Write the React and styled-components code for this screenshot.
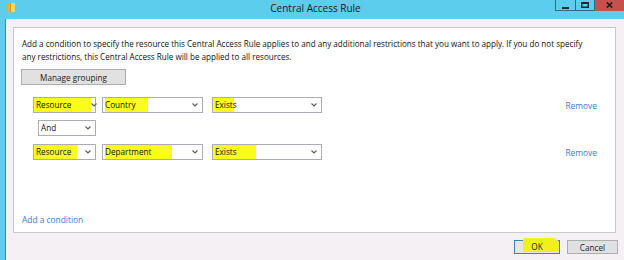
import React from 'react';
import styled, { createGlobalStyle } from 'styled-components';

const Global = createGlobalStyle`
  html, body { margin: 0; padding: 0; background: #f4f0f4; }
  body { font-family: "Open Sans", "Noto Sans", sans-serif; color: #1b1b1b; }
  #root { width: 624px; height: 260px; overflow: hidden; }
`;

const Window = styled.div`
  width: 624px;
  height: 260px;
  display: flex;
  flex-direction: column;
  background: #5ccdec;
  overflow: hidden;
`;

const TitleBar = styled.div`
  height: 19px;
  flex: none;
  display: grid;
  grid-template-columns: 1fr auto 1fr;
  align-items: start;
  padding-left: 7px;
  background: #5ccdec;
`;

const TitleIcon = styled.svg`
  margin-top: 3px;
  display: block;
`;

const TitleText = styled.div`
  font-size: 10px;
  line-height: 12px;
  margin-top: 2px;
  color: #1a1a1a;
`;

const Controls = styled.div`
  justify-self: end;
  display: flex;
  height: 11px;
`;

const CtrlButton = styled.div`
  flex: none;
  width: ${p => p.$w}px;
  height: 11px;
  box-sizing: border-box;
  display: flex;
  align-items: center;
  justify-content: center;
  background-color: ${p => (p.$close ? '#c7504e' : '#5ccdec')};
  border-right: 1px solid ${p => (p.$close ? '#c7504e' : '#2f6f85')};
  border-bottom: 1px solid ${p => (p.$close ? '#c7504e' : '#2f6f85')};
  border-left: ${p => (p.$first ? '1px solid #2f6f85' : 'none')};
`;

const Frame = styled.div`
  flex: 1;
  display: flex;
  padding-left: 5px;
  min-height: 0;
`;

const Client = styled.div`
  flex: 1;
  display: flex;
  flex-direction: column;
  background: #f4f0f4;
  border-left: 1px solid #3d8aa2;
  padding: 8px 6px 0 7px;
`;

const Panel = styled.div`
  height: 206px;
  box-sizing: border-box;
  margin-right: 2px;
  background: #fff;
  border: 1px solid #c9c9c9;
  display: flex;
  flex-direction: column;
  padding: 9px 8px 0 8px;
  font-size: 8px;
`;

const Intro = styled.p`
  margin: 0;
  font-size: 8.1px;
  line-height: 13px;
  white-space: nowrap;
  color: #111;
`;

const PushButton = styled.button`
  font-family: inherit;
  font-size: 8.2px;
  color: #1b1b1b;
  box-sizing: border-box;
  height: ${p => p.$h || 16}px;
  width: ${p => p.$w}px;
  padding: 0;
  display: flex;
  align-items: center;
  justify-content: center;
  background: ${p => (p.$default ? '#e6e6e6' : '#e1e1e1')};
  border: 1px solid ${p => (p.$default ? '#3b82b8' : '#adadad')};
  border-radius: 0;
  margin: ${p => p.$m || '0'};
`;

const Row = styled.div`
  display: flex;
  align-items: center;
  height: 16px;
  margin-top: ${p => p.$mt}px;
  padding-left: ${p => p.$pl}px;
`;

const SelectBox = styled.div`
  box-sizing: border-box;
  width: ${p => p.$w}px;
  height: 16px;
  margin-left: ${p => p.$ml || 0}px;
  border: 1px solid #abadb3;
  background: #fff;
  display: flex;
  align-items: center;
  padding-left: 2px;
  padding-right: 4px;
`;

const SelectValue = styled.span`
  flex: 1;
  font-size: 8.2px;
  line-height: 14px;
  white-space: nowrap;
  display: flex;
  color: #111;
`;

const Mark = styled.span`
  display: inline-block;
  box-sizing: border-box;
  background: #fbfb1e;
  height: 14px;
  line-height: 14px;
  width: ${p => p.$w}px;
  margin-left: -${p => p.$ml || 0}px;
  padding-left: ${p => p.$ml || 0}px;
  white-space: nowrap;
  overflow: visible;
`;

const Chevron = styled.svg`
  flex: none;
  display: block;
`;

const Link = styled.a`
  color: #3a7ad8;
  font-size: 8.4px;
  line-height: 13px;
  text-decoration: none;
  cursor: pointer;
  margin-left: ${p => (p.$right ? 'auto' : '0')};
  margin-right: ${p => (p.$right ? 10 : 0)}px;
`;

const BottomLink = styled.div`
  margin-top: auto;
  margin-bottom: 6px;
  display: flex;
`;

const Footer = styled.div`
  display: flex;
  justify-content: flex-end;
  gap: 7px;
  margin-top: 7px;
`;

const OkMark = styled.span`
  display: inline-flex;
  align-items: center;
  justify-content: center;
  width: 38px;
  height: 14px;
  margin-left: 8px;
  background: #f0f01a;
  border-radius: 2px 6px 3px 1px;
  transform: translateY(-2px);
  line-height: 14px;
`;

const OkText = styled.span`
  transform: translateY(2px);
  margin-left: -8px;
`;

function Select({ w, ml, value, mark }) {
  return (
    <SelectBox $w={w} $ml={ml}>
      <SelectValue>
        {mark ? (
          <Mark $w={mark.w} $ml={mark.ml}>{value}</Mark>
        ) : (
          value
        )}
      </SelectValue>
      <Chevron width="6" height="4" viewBox="0 0 6 4">
        <polyline points="0.5,0.5 3,3 5.5,0.5" fill="none" stroke="#5a5a5a" strokeWidth="1.1" />
      </Chevron>
    </SelectBox>
  );
}

function Condition({ mt, a, b, c }) {
  return (
    <Row $mt={mt} $pl={11}>
      <Select w={63} value="Resource" mark={a} />
      <Select w={101} ml={6} value={b.value} mark={b.mark} />
      <Select w={110} ml={9} value="Exists" mark={c} />
      <Link $right>Remove</Link>
    </Row>
  );
}

export default function App() {
  return (
    <>
      <Global />
      <Window>
        <TitleBar>
          <TitleIcon width="9" height="10" viewBox="0 0 9 10">
            <rect x="0.5" y="1" width="5" height="8.5" fill="#d9b344" />
            <rect x="3" y="0" width="5" height="9" fill="#f3d36b" />
            <rect x="3" y="0" width="1" height="9" fill="#c99b2c" />
          </TitleIcon>
          <TitleText>Central Access Rule</TitleText>
          <Controls>
            <CtrlButton $w={21} $first>
              <svg width="7" height="7" viewBox="0 0 7 7">
                <rect x="0" y="5" width="7" height="2" fill="#1c2b33" />
              </svg>
            </CtrlButton>
            <CtrlButton $w={19}>
              <svg width="8" height="6" viewBox="0 0 8 6">
                <rect x="0.75" y="0.75" width="6.5" height="4.5" fill="none" stroke="#1c2b33" strokeWidth="1.5" />
                <rect x="0" y="0" width="8" height="2" fill="#1c2b33" />
              </svg>
            </CtrlButton>
            <CtrlButton $w={29} $close>
              <svg width="7" height="6" viewBox="0 0 7 6">
                <path d="M0.8 0.5 L6.2 5.5 M6.2 0.5 L0.8 5.5" stroke="#1a1a1a" strokeWidth="1.6" />
              </svg>
            </CtrlButton>
          </Controls>
        </TitleBar>
        <Frame>
          <Client>
            <Panel>
              <Intro>
                Add a condition to specify the resource this Central Access Rule applies to and any additional restrictions that you want to apply. If you do not specify
                <br />
                any restrictions, this Central Access Rule will be applied to all resources.
              </Intro>
              <PushButton $w={105} $m="6px 0 0 -1px">Manage grouping</PushButton>
              <Condition
                mt={12}
                a={{ w: 57, ml: 2 }}
                b={{ value: 'Country', mark: { w: 43, ml: 0 } }}
                c={{ w: 21, ml: 2 }}
              />
              <Row $mt={7} $pl={16}>
                <Select w={58} value="And" />
              </Row>
              <Condition
                mt={8}
                a={{ w: 43, ml: 2 }}
                b={{ value: 'Department', mark: { w: 67, ml: 0 } }}
                c={{ w: 43, ml: 2 }}
              />
              <BottomLink>
                <Link>Add a condition</Link>
              </BottomLink>
            </Panel>
            <Footer>
              <PushButton $w={46} $h={14} $default>
                <OkMark><OkText>OK</OkText></OkMark>
              </PushButton>
              <PushButton $w={51} $h={14}>Cancel</PushButton>
            </Footer>
          </Client>
        </Frame>
      </Window>
    </>
  );
}
